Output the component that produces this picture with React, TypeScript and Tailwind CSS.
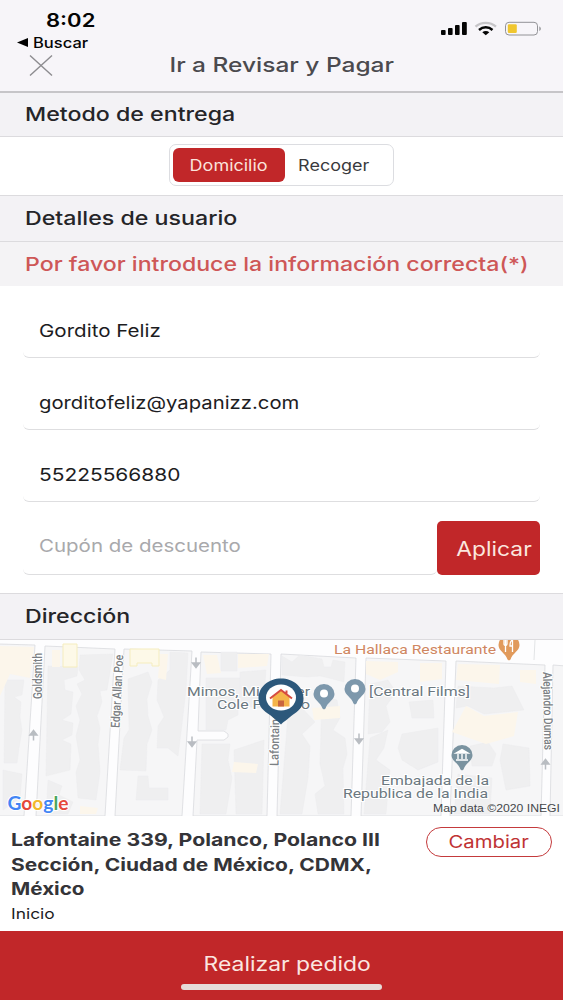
import { ReactNode } from "react";

const fields = [
    { value: "Gordito Feliz", scale: "scale-x-[1.175]" },
    { value: "gorditofeliz@yapanizz.com", scale: "scale-x-[1.158]" },
    { value: "55225566880", scale: "scale-x-[1.195]" },
];

// city blocks between the streets
const blocks = [
    "-2,4 35,5 24,176 -2,176",
    "45,6 115,9 105,176 36,176",
    "124,9 192,11 182,176 115,176",
    "201,12 271,14 267,176 193,176 197,100 224,100 228,97 228,94 224,91 198,91",
    "281,14 356,18 351,176 277,176",
    "366,18 446,21 441,176 361,176",
    "456,21 545,25 541,176 450,176",
    "553,25 566,26 566,176 550,176",
];

const buildings = [
    "5,40 24,40 22,55 14,57 21,62 20,77 22,90 19,108 17,123 4,123",
    "3,130 22,134 20,158 3,170",
    "48,26 78,27 77,36 64,40 65,50 73,52 71,74 62,80 73,83 72,95 62,100 71,104 70,130 46,136",
    "80,15 113,14 107,50 100,51 102,62 97,76 100,88 98,104 100,132 96,160 78,158 76,132 80,120 76,96 80,80 76,66 82,54 77,44 85,40 79,30",
    "48,140 62,146 59,155 73,162 68,174 46,174",
    "128,39 148,32 152,42 147,59 148,76 152,90 147,104 146,131 120,130 124,98 129,90",
    "158,40 170,30 170,12 188,13 186,50 182,84 178,116 168,108 157,108 158,86 164,77 157,60",
    "138,136 148,136 149,148 168,148 168,160 136,160",
    "221,12 237,12 237,31 221,31",
    "206,38 240,38 244,52 238,60 238,75 228,80 226,90 206,90",
    "240,32 266,30 263,68 240,66",
    "202,104 230,104 228,120 232,138 226,174 200,174",
    "234,110 264,100 262,174 236,174",
    "282,16 292,22 300,15 322,19 324,27 331,27 333,20 345,22 344,42 329,38 320,36 307,37 282,35",
    "290,44 304,54 302,68 315,82 302,94 310,106 308,138 302,174 280,174 286,100",
    "322,56 337,60 340,78 333,90 345,98 347,114 343,128 344,174 318,174 315,154 325,146 320,124",
    "370,44 388,40 396,52 386,66 390,82 382,92 368,94",
    "409,62 433,60 434,78 412,78",
    "370,98 388,90 384,108 376,120 390,130 386,174 364,174",
    "402,94 438,88 438,122 418,130 402,120 398,108",
    "458,46 494,48 512,46 524,70 484,74 468,66 456,68",
    "470,106 488,102 496,114 492,126 472,126",
    "503,104 529,108 530,146 506,150 500,120",
    "458,134 492,138 490,174 454,174",
];

const shops = [
    "-2,6 34,7 30,38 10,34 0,56",
    "52,10 60,10 60,27 52,27",
    "160,14 168,14 166,40 158,38",
    "203,15 217,15 221,33 207,34",
    "238,14 269,14 267,26 238,28",
    "234,122 258,124 256,133 232,132",
    "312,68 340,66 340,78 314,80",
    "366,21 398,22 398,32 380,40 366,34",
    "420,23 442,23 442,39 420,42",
    "458,24 500,25 499,44 456,40",
    "520,30 536,30 536,44 520,42",
    "466,66 484,76 518,72 514,96 486,104 452,92",
    "80,166 98,168 96,174 80,174",
];

const arrows = [
    { x: 33.5, y: 95, up: true },
    { x: 196, y: 23, up: false },
    { x: 192, y: 102, up: false },
    { x: 359, y: 99, up: false },
    { x: 545.5, y: 124, up: true },
];

function SectionTitle({ children, className }: { children: ReactNode; className: string }) {
    return (
        <h2 className={`flex items-center border-y border-[#dcdbde] bg-[#f3f2f5] pt-[2px] pl-[25px] text-[19px] font-medium text-[#252528] ${className}`}>
            <span className="origin-left scale-x-[1.22] whitespace-nowrap">{children}</span>
        </h2>
    );
}

function StatusIcons() {
    return (
        <svg className="mt-[20px] h-[18px] w-[104px]" viewBox="440 20 104 18">
            <g fill="#050505">
                <rect x="441" y="30" width="4.6" height="5" rx="1" />
                <rect x="448" y="28" width="4.6" height="7" rx="1" />
                <rect x="455" y="25" width="4.6" height="10" rx="1" />
                <rect x="462" y="22" width="4.8" height="13" rx="1" />
            </g>
            <g fill="none" strokeWidth="2.4">
                <path d="M475.5 26.6c6-5 14.500-5 20.500 0" stroke="#c6c5c8" />
                <path d="M479 30c4-3.600 9.500-3.600 13.500 0" stroke="#050505" />
            </g>
            <path d="M482.300 32.300c2-1.700 5-1.700 7 0l-3.500 2.900z" fill="#050505" />
            <rect x="505.500" y="22.300" width="32" height="12.700" rx="3.500" fill="none" stroke="#929296" />
            <rect x="507.800" y="24.200" width="9" height="8.800" rx="1.200" fill="#f0c62f" />
            <path d="M539.300 26.500c2 .7 2 3.700 0 4.400z" fill="#929296" />
        </svg>
    );
}

function Pin({ x, y, color }: { x: number; y: number; color: string }) {
    return (
        <path
            d={`M${x - 10.5} ${y}a10.500 10 0 0 1 21 0c0 6-7 8-9 14.500l-1.500 1l-1.500-1c-2-6.500-9-8.500-9-14.500z`}
            fill={color}
        />
    );
}

function DeliveryMap() {
    return (
        <svg className="block h-[176px] w-full" viewBox="0 0 563 176" fontFamily="Roboto, 'Liberation Sans', sans-serif">
            <rect width="563" height="176" fill="#fdfdfe" />
            {blocks.map((points) => (
                <polygon key={points} points={points} fill="#f6f6f7" stroke="#d9dbde" strokeWidth=".8" />
            ))}
            {buildings.map((points) => (
                <polygon key={points} points={points} fill="#efeff0" stroke="#ebebed" strokeWidth=".4" />
            ))}
            {shops.map((points) => (
                <polygon key={points} points={points} fill="#fcf6eb" />
            ))}
            <g fill="#fdf9e8" stroke="#f5edbe">
                <path d="M63 4h14v23H63zM130 9h29v17h-7v-3h-15v3h-7z" />
            </g>
            <path d="M510 0v18M535 0l-1 20" stroke="#e2e4e6" />

            {arrows.map((a) => (
                <path
                    key={a.x}
                    d={a.up ? "M0 5.500V-2M-3.500 0L0-4.500L3.500 0z" : "M0-5.500V2M-3.500 0L0 4.500L3.500 0z"}
                    transform={`translate(${a.x} ${a.y})`}
                    fill="#b9bdc2"
                    stroke="#b9bdc2"
                    strokeWidth="1.500"
                />
            ))}

            <g fontSize="12.500" fontWeight="500" fill="#7b7f84" stroke="#fff" strokeWidth="2" paintOrder="stroke">
                <text transform="translate(41.500 59) rotate(-90)" textLength="46" lengthAdjust="spacingAndGlyphs">Goldsmith</text>
                <text transform="translate(119.500 88) rotate(-87)" textLength="73" lengthAdjust="spacingAndGlyphs">Edgar Allan Poe</text>
                <text transform="translate(278.500 126) rotate(-89)" textLength="53" lengthAdjust="spacingAndGlyphs">Lafontaine</text>
                <text transform="translate(543 32) rotate(89)" textLength="78" lengthAdjust="spacingAndGlyphs">Alejandro Dumas</text>
            </g>

            <g fontSize="13" fill="#6b7880" stroke="#fff" strokeWidth="2" paintOrder="stroke">
                <text x="187" y="55.500" textLength="123" lengthAdjust="spacingAndGlyphs">Mimos, Mi Amber</text>
                <text x="217" y="68.500" textLength="93" lengthAdjust="spacingAndGlyphs">Cole Polanco</text>
                <text x="369" y="56" textLength="101" lengthAdjust="spacingAndGlyphs">[Central Films]</text>
                <text x="381" y="145" textLength="108" lengthAdjust="spacingAndGlyphs">Embajada de la</text>
                <text x="343" y="158" textLength="145" lengthAdjust="spacingAndGlyphs">Republica de la India</text>
                <text x="334" y="14" fill="#cf8661" textLength="162" lengthAdjust="spacingAndGlyphs">La Hallaca Restaurante</text>
            </g>

            <Pin x={324} y={54} color="#7d98ac" />
            <circle cx="324" cy="53.500" r="4" fill="#fff" />
            <Pin x={355} y={49} color="#7d98ac" />
            <circle cx="355" cy="48.500" r="4" fill="#fff" />
            <Pin x={509} y={5} color="#e19a5b" />
            <path d="M504 0v4c0 2 3 2 3 0V0M505.500 0v12M512.500 12V0c-2.500 1-2.500 4-2.500 6h2.500" fill="none" stroke="#fff" strokeWidth="1.300" />
            <Pin x={462} y={115} color="#7a93a0" />
            <path d="M456 113l6-3.500l6 3.500zM456 120h12M458 114v5M462 114v5M466 114v5" fill="#fff" stroke="#fff" strokeWidth="1.400" />

            {/* delivery address marker */}
            <path d="M281 84.500c-1.500-2-6-5-11-9.500c-6-4-11.500-8-11.500-16.500c0-12 10.500-20 22.500-20s22.500 8 22.500 20c0 8.500-5 12.500-11 16.500c-5 4.500-10 7.500-11.500 9.500z" fill="#2c587b" />
            <ellipse cx="281" cy="57.500" rx="15" ry="13" fill="#fff" />
            <path d="M272.500 57l8.500-7l8.500 7v9.500h-17z" fill="#f5b54a" />
            <path d="M278 60.500h6v6h-6z" fill="#c9663e" />
            <path d="M270 58.500l11-8.500l11 8.500M286.500 53.500v-3" fill="none" stroke="#d64b40" strokeWidth="2" />

            <text x="7.500" y="169.500" fontSize="18" fontWeight="700" fontFamily="Lato, sans-serif" textLength="61" lengthAdjust="spacingAndGlyphs" stroke="#fff" strokeWidth="2" paintOrder="stroke">
                <tspan fill="#4285f4">G</tspan>
                <tspan fill="#e5483b">o</tspan>
                <tspan fill="#f2b92c">o</tspan>
                <tspan fill="#4285f4">g</tspan>
                <tspan fill="#4aa55c">l</tspan>
                <tspan fill="#e5483b">e</tspan>
            </text>
            <text x="433" y="171.500" fontSize="11" fill="#45484b" fontFamily="'Liberation Sans', sans-serif" textLength="127" lengthAdjust="spacingAndGlyphs">Map data ©2020 INEGI</text>
        </svg>
    );
}

export default function App() {
    return (
        <div className="flex h-[1000px] w-[563px] flex-col overflow-hidden bg-white font-[Inter,'Liberation_Sans',sans-serif]">

            <header className="h-[91px] shrink-0 bg-[#f7f5f9] text-[#050505]">
                <div className="flex h-[52px] justify-between pr-[19px]">
                    <div className="flex flex-col pl-[17px]">
                        <span className="mt-[10px] ml-[29px] origin-left scale-x-[1.19] text-[18.5px] leading-[20px] font-semibold">8:02</span>
                        <div className="mt-[4px] flex items-center text-[14px] leading-[17px] font-medium">
                            <svg className="mr-[5px] h-[9px] w-[11px]" viewBox="0 0 11 9">
                                <path d="M0 4.500L11 0v9z" />
                            </svg>
                            <span className="origin-left scale-x-[1.18]">Buscar</span>
                        </div>
                    </div>
                    <StatusIcons />
                </div>
                <div className="flex items-start">
                    <svg className="mt-[3px] ml-[29px] h-[21px] w-[24px]" viewBox="0 0 24 21">
                        <path d="M1 .5l22 20M23 .5l-22 20" stroke="#8d8c90" strokeWidth="1.400" />
                    </svg>
                    <h1 className="flex-1 pt-px text-center text-[20px] leading-[25px] font-medium text-[#4b4a4e]">
                        <span className="inline-block scale-x-[1.224]">Ir a Revisar y Pagar</span>
                    </h1>
                    <div className="w-[53px]" />
                </div>
            </header>

            <SectionTitle className="h-[46px] border-t-2 border-t-[#c6c5c8]">Metodo de entrega</SectionTitle>

            <div className="flex h-[58px] items-start justify-center pt-[7px]">
                <div className="flex h-[42px] w-[225px] rounded-[7px] border border-[#dcdde1] p-[3px] text-[15.5px]">
                    <button className="h-[34px] w-[112px] rounded-[6px] bg-[#c12729] pt-[2px] text-[#fbe3dc]">
                        <span className="inline-block scale-x-[1.16]">Domicilio</span>
                    </button>
                    <button className="h-[34px] w-[98px] pt-[2px] text-[#39393c]">
                        <span className="inline-block scale-x-[1.16]">Recoger</span>
                    </button>
                </div>
            </div>

            <SectionTitle className="h-[47px]">Detalles de usuario</SectionTitle>

            <p className="flex h-[44px] items-center bg-[#f4f3f5] pt-[2px] pl-[25px] text-[19px] font-medium text-[#ce5757]">
                <span className="origin-left scale-x-[1.217] whitespace-nowrap">Por favor introduce la información correcta(*)</span>
            </p>

            <form className="h-[307px] px-[23px]">
                {fields.map((field) => (
                    <div key={field.value} className="flex h-[72px] items-end rounded-[6px] border-b-[1.5px] border-[#dedee0] pb-[14px] pl-[16px] text-[17.5px] leading-[24px] text-[#1d1d1f]">
                        <span className={`origin-left whitespace-nowrap ${field.scale}`}>{field.value}</span>
                    </div>
                ))}
                <div className="flex h-[73px] items-end">
                    <div className="flex h-[72px] w-[414px] items-end rounded-[6px] border-b-[1.5px] border-[#dedee0] pb-[16px] pl-[16px] text-[17.5px] leading-[24px] text-[#a9a9ac]">
                        <span className="origin-left scale-x-[1.17]">Cupón de descuento</span>
                    </div>
                    <button type="button" className="h-[54px] w-[103px] shrink-0 rounded-[5px] bg-[#c12729] pt-[2px] pl-[11px] text-[20px] text-[#fbe6de]">
                        <span className="inline-block scale-x-[1.14]">Aplicar</span>
                    </button>
                </div>
            </form>

            <SectionTitle className="h-[47px]">Dirección</SectionTitle>

            <DeliveryMap />

            <div className="flex h-[115px] justify-between pt-[11px] pr-[11px] pl-[11px]">
                <div className="pt-px">
                    <div className="w-[320px] text-[17.5px] leading-[24.5px] font-bold whitespace-nowrap text-[#343438]">
                        <p className="origin-left scale-x-[1.214]">Lafontaine 339, Polanco, Polanco III</p>
                        <p className="origin-left scale-x-[1.198]">Sección, Ciudad de México, CDMX,</p>
                        <p className="origin-left scale-x-[1.18]">México</p>
                    </div>
                    <p className="origin-left scale-x-[1.2] text-[14.5px] leading-[23px] text-[#1d1d1f]">Inicio</p>
                </div>
                <button className="h-[30px] w-[126px] rounded-full border-[1.5px] border-[#c43a3c] text-[17.5px] leading-none text-[#bf3335]">
                    <span className="inline-block scale-x-[1.16]">Cambiar</span>
                </button>
            </div>

            <footer className="flex flex-1 flex-col items-center bg-[#c12729]">
                <span className="mt-[21px] ml-[12px] scale-x-[1.175] text-[19.5px] leading-[24px] text-[#fbe6e0]">Realizar pedido</span>
                <div className="mt-[8px] h-[6px] w-[201px] rounded-full bg-[#e6dcd9]" />
            </footer>
        </div>
    );
}
